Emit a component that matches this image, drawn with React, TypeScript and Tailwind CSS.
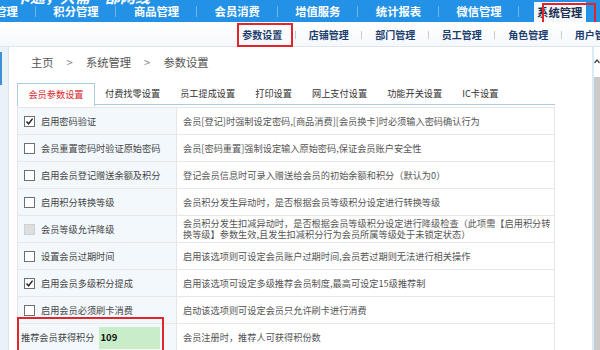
import React from "react";

const topNav = ["会员管理", "积分管理", "商品管理", "会员消费", "增值服务", "统计报表", "微信管理", "系统管理"];
const subNav = ["参数设置", "店铺管理", "部门管理", "员工管理", "角色管理", "用户管理"];
const tabs = ["会员参数设置", "付费找零设置", "员工提成设置", "打印设置", "网上支付设置", "功能开关设置", "IC卡设置"];

type Row = { label: string; desc: React.ReactNode; state: "on" | "off" | "disabled" };

const rows: Row[] = [
  { label: "启用密码验证", desc: "会员[登记]时强制设定密码,[商品消费][会员换卡]时必须输入密码确认行为", state: "on" },
  { label: "会员重置密码时验证原始密码", desc: "会员[密码重置]强制设定输入原始密码,保证会员账户安全性", state: "off" },
  { label: "启用会员登记赠送余额及积分", desc: "登记会员信息时可录入赠送给会员的初始余额和积分（默认为0）", state: "off" },
  { label: "启用积分转换等级", desc: "会员积分发生异动时，是否根据会员等级积分设定进行转换等级", state: "off" },
  {
    label: "会员等级允许降级",
    desc: (
      <>
        会员积分发生扣减异动时，是否根据会员等级积分设定进行降级检查（此项需【启用积分转
        <br />
        换等级】参数生效,且发生扣减积分行为会员所属等级处于未锁定状态）
      </>
    ),
    state: "disabled",
  },
  { label: "设置会员过期时间", desc: "启用该选项则可设定会员账户过期时间,会员若过期则无法进行相关操作", state: "off" },
  { label: "启用会员多级积分提成", desc: "启用该选项可设定多级推荐会员制度,最高可设定15级推荐制", state: "on" },
  { label: "启用会员必须刷卡消费", desc: "启动该选项则可设定会员只允许刷卡进行消费", state: "off" },
];

function Checkbox({ state }: { state: Row["state"] }) {
  if (state === "disabled") {
    return <span className="h-[11px] w-[11px] shrink-0 border border-[#d0d0d0] bg-[#dedede]" />;
  }
  return (
    <span className="flex h-[11px] w-[11px] shrink-0 items-center justify-center border border-[#6f6f6f] bg-white">
      {state === "on" && (
        <svg width="9" height="9" viewBox="0 0 9 9">
          <path d="M1.5 4.5 L3.6 6.8 L7.6 1.6" fill="none" stroke="#222" strokeWidth="1.4" />
        </svg>
      )}
    </span>
  );
}

export default function App() {
  return (
    <div className="relative h-[350px] w-[600px] overflow-hidden bg-[#eaf2f9] font-['Noto_Sans_CJK_SC',sans-serif]">
      {/* top nav */}
      <div className="relative h-[22px] bg-[#2392e6]">
        <div className="absolute left-[15px] top-[-11px] text-[15px] font-bold italic leading-none text-white">
          卡通，只需一部网线
        </div>
        <div className="ml-[-45px] flex h-full">
          {topNav.map((t, i) => (
            <div key={t} className="relative flex h-full w-[82px] items-center justify-center">
              {i === topNav.length - 1 ? (
                <div className="mt-[3px] flex h-[22px] w-[52px] items-center justify-center bg-[#f4f8fc] text-[11.3px] font-bold text-[#1b2f4d]">
                  {t}
                </div>
              ) : (
                <span className="text-[11.3px] font-bold text-white">{t}</span>
              )}
              {i < topNav.length - 1 && (
                <span className="absolute right-0 top-[6px] h-[11px] w-px bg-[#6cb6ef]" />
              )}
            </div>
          ))}
        </div>
        <div className="absolute left-[542px] top-[3px] h-[22px] w-[54px] border-2 border-[#e0262b]" />
      </div>

      {/* sub nav */}
      <div className="relative flex h-[25px] border-b border-[#dfe6ee] bg-gradient-to-b from-white to-[#f5f8fb] pl-[229px]">
        {subNav.map((t, i) => (
          <div key={t} className="relative flex h-full w-[66.5px] shrink-0 items-center justify-center">
            <span className="text-[10px] font-bold text-[#1b3d6e]">{t}</span>
            {i < subNav.length - 1 && <span className="absolute right-0 top-[9px] h-[8px] w-px bg-[#c5ccd4]" />}
          </div>
        ))}
        <div className="absolute left-[237px] top-[1px] h-[24px] w-[56px] border-2 border-[#e0262b]" />
      </div>

      {/* body */}
      <div className="flex h-[303px]">
        <div className="relative w-[8px] shrink-0">
          <span className="absolute left-0 top-[5px] h-[33px] w-[2px] bg-[#3d8fd6]" />
        </div>
        <div className="relative flex-1 border-l border-[#dde3ea] bg-white">
          <div className="flex h-[30px] items-center gap-[13px] pl-[22px] text-[11.3px] text-[#555]">
            <span>主页</span>
            <span className="text-[#888]">&gt;</span>
            <span>系统管理</span>
            <span className="text-[#888]">&gt;</span>
            <span>参数设置</span>
          </div>

          <div className="ml-[8px] mt-[6px] flex h-[22px] w-[538px] border-b border-[#a9cbe6]">
            {tabs.map((t, i) =>
              i === 0 ? (
                <div
                  key={t}
                  className="mb-[-1px] flex h-[23px] w-[78px] items-center justify-center border border-b-0 border-[#a9cbe6] bg-white text-[9.2px] text-[#d9262b]"
                >
                  {t}
                </div>
              ) : (
                <div key={t} className="flex h-full items-center px-[10px] text-[9.2px] text-[#333]">
                  {t}
                </div>
              )
            )}
          </div>

          <div className="ml-[8px] mt-[2px] w-[538px] border-x border-t border-[#e6e6e6] text-[9.2px] leading-[11px]">
            {rows.map((r) => (
              <div key={r.label} className="flex h-[27px] box-border border-b border-[#e8e8e8]">
                <div className="flex w-[159px] shrink-0 items-center gap-[6px] border-r border-[#e6e6e6] bg-[#f3f8fc] pl-[6px] text-[#444]">
                  <Checkbox state={r.state} />
                  <span>{r.label}</span>
                </div>
                <div className="flex flex-1 items-center pl-[6px] text-[#555]">
                  <span>{r.desc}</span>
                </div>
              </div>
            ))}
            <div className="flex h-[27px]">
              <div className="flex w-[159px] shrink-0 items-center border-r border-[#e6e6e6] bg-[#f3f8fc] pl-[3px] text-[#444]">
                <span>推荐会员获得积分</span>
                <div className="ml-[4px] flex h-[22px] w-[61px] items-center bg-[#c9edc9] pl-[2px] text-[9.5px] font-bold text-[#111]">
                  109
                </div>
              </div>
              <div className="flex flex-1 items-center pl-[6px] text-[#555]">会员注册时，推荐人可获得积份数</div>
            </div>
          </div>

          <div className="absolute left-[8px] top-[270px] h-[40px] w-[147px] border-2 border-[#e0262b]" />

          {/* scrollbar */}
          <div className="absolute right-0 top-0 flex h-full w-[8px]">
            <div className="w-[2px] bg-[#d9ebf7]" />
            <div className="relative flex-1 bg-[#cbcbcb]">
              <div className="absolute left-0 top-0 h-[30px] w-full bg-white" />
              <svg className="absolute left-[0px] top-[12px]" width="6" height="5" viewBox="0 0 6 5">
                <path d="M0.5 4 L3 1 L5.5 4" fill="none" stroke="#444" strokeWidth="1.2" />
              </svg>
            </div>
          </div>
        </div>
      </div>
    </div>
  );
}
